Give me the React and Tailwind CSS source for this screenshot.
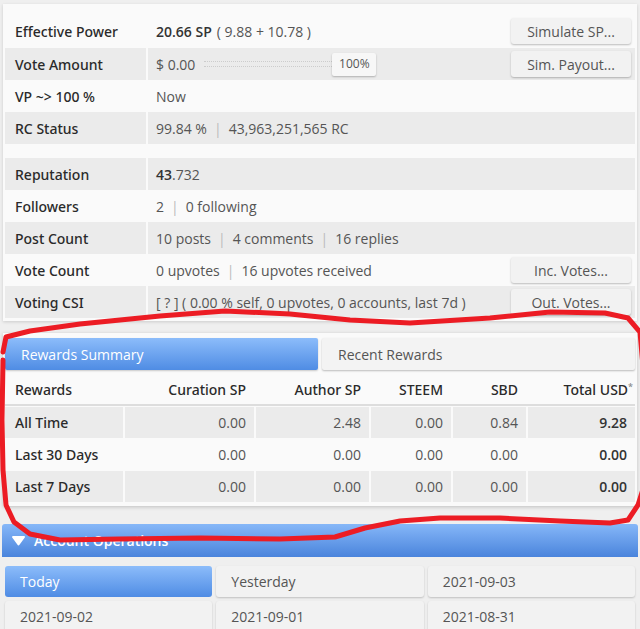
import React from 'react';

const Sep = () => <span className="mx-[7px] text-[#bbb]">|</span>;

const Btn = ({ children }) => (
  <button className="mr-[4px] h-[26px] w-[120px] rounded-[3px] bg-[#f2f2f2] text-[14px] text-[#555] shadow-[0_1px_2px_rgba(0,0,0,0.25)]">
    {children}
  </button>
);

const Slider = () => (
  <div className="flex items-center">
    <span>$ 0.00</span>
    <div className="ml-[9px] h-[6px] w-[128px] border-y border-dotted border-[#ccc]" />
    <div className="flex h-[23px] w-[44px] items-center justify-center rounded-[2px] bg-[#f7f7f7] text-[12px] text-[#555] shadow-[0_1px_2px_rgba(0,0,0,0.25)]">
      100%
    </div>
  </div>
);

const label = "font-['Noto_Sans','Open_Sans',sans-serif] font-medium text-[#2a2a2a]";

const Row = ({ label: text, gray, children, button, h = 'h-[32px]' }) => (
  <div className={`flex ${h} gap-[2px]`}>
    <div className={`flex w-[141px] items-center pl-[10px] ${label} ${gray ? 'bg-[#ebebeb]' : ''}`}>
      {text}
    </div>
    <div className={`flex flex-1 items-center justify-between pl-[8px] text-[#555] ${gray ? 'bg-[#ebebeb]' : ''}`}>
      <div className="flex items-center">{children}</div>
      {button && <Btn>{button}</Btn>}
    </div>
  </div>
);

const rewardRows = [
  ['All Time', '0.00', '2.48', '0.00', '0.84', '9.28'],
  ['Last 30 Days', '0.00', '0.00', '0.00', '0.00', '0.00'],
  ['Last 7 Days', '0.00', '0.00', '0.00', '0.00', '0.00'],
];

const cols = 'grid grid-cols-[118px_129px_113px_80px_73px_1fr] gap-x-[2px]';

const OpBtn = ({ children, active }) => (
  <div
    className={`flex h-[31px] items-center rounded-[3px] pl-[15px] ${
      active
        ? 'bg-gradient-to-b from-[#8cbcfa] to-[#4f8ce4] text-white'
        : 'bg-[#f2f2f2] text-[#555] shadow-[0_1px_2px_rgba(0,0,0,0.2)]'
    }`}
  >
    {children}
  </div>
);

export default function App() {
  return (
    <div className="relative h-[629px] w-[640px] overflow-hidden bg-[#efefef] pt-[4px] font-['Open_Sans','Noto_Sans',sans-serif] text-[14px]">
      {/* account stats card */}
      <div className="mx-[3px] bg-[#fafafa] px-[2px] pt-[10px] pb-[3px] shadow-[0_1px_3px_rgba(0,0,0,0.15)]">
        <Row label="Effective Power" button="Simulate SP..." h="h-[34px]">
          <span className="font-semibold text-[#333]">20.66 SP</span>
          <span className="ml-[5px]">( 9.88 + 10.78 )</span>
        </Row>
        <Row label="Vote Amount" gray button="Sim. Payout...">
          <Slider />
        </Row>
        <Row label="VP ~> 100 %">Now</Row>
        <Row label="RC Status" gray>
          99.84 % <Sep /> 43,963,251,565 RC
        </Row>
        <div className="h-[14px]" />
        <Row label="Reputation" gray>
          <span className="font-semibold text-[#333]">43</span>.732
        </Row>
        <Row label="Followers">
          2 <Sep /> 0 following
        </Row>
        <Row label="Post Count" gray>
          10 posts <Sep /> 4 comments <Sep /> 16 replies
        </Row>
        <Row label="Vote Count" button="Inc. Votes...">
          0 upvotes <Sep /> 16 upvotes received
        </Row>
        <Row label="Voting CSI" gray button="Out. Votes...">
          [ ? ] ( 0.00 % self, 0 upvotes, 0 accounts, last 7d )
        </Row>
      </div>

      {/* rewards card */}
      <div className="mx-[3px] mt-[12px] bg-[#fafafa] px-[2px] pt-[5px] pb-[4px] shadow-[0_1px_4px_rgba(0,0,0,0.2)]">
        <div className="flex gap-[4px]">
          <div className="flex h-[32px] w-[313px] items-center rounded-[2px] bg-gradient-to-b from-[#8cbcfa] to-[#4f8ce4] pl-[16px] text-white shadow-[0_1px_2px_rgba(0,0,0,0.2)]">
            Rewards Summary
          </div>
          <div className="flex h-[32px] flex-1 items-center rounded-[2px] bg-[#f3f3f3] pl-[16px] text-[#555] shadow-[0_1px_2px_rgba(0,0,0,0.25)]">
            Recent Rewards
          </div>
        </div>
        <div className={`${cols} mt-[4px] h-[32px] items-center border-b-2 border-[#ddd] ${label}`}>
          <div className="pl-[10px]">Rewards</div>
          <div className="pr-[8px] text-right">Curation SP</div>
          <div className="pr-[8px] text-right">Author SP</div>
          <div className="pr-[8px] text-right">STEEM</div>
          <div className="pr-[8px] text-right">SBD</div>
          <div className="pr-[2px] text-right">
            Total USD<sup className="text-[9px] text-[#888]">*</sup>
          </div>
        </div>
        {rewardRows.map((r, i) => (
          <div key={r[0]} className={`${cols} mt-[1px] h-[31px] text-[#555]`}>
            {r.map((c, j) => (
              <div
                key={j}
                className={`flex items-center ${i % 2 === 0 ? 'bg-[#ebebeb]' : ''} ${
                  j === 0 ? `pl-[10px] ${label}` : 'justify-end pr-[8px]'
                } ${j === 5 ? 'font-semibold text-[#333]' : ''}`}
              >
                {c}
              </div>
            ))}
          </div>
        ))}
      </div>

      {/* account operations */}
      <div className="mx-[2px] mt-[18px] flex h-[33px] items-center rounded-t-[3px] bg-gradient-to-b from-[#86b7f8] to-[#4a84dc] pl-[9px] font-semibold text-white">
        <svg width="15" height="11" viewBox="0 0 15 11" className="mr-[8px]">
          <path d="M2 2 H13 L7.5 9.5 Z" fill="white" stroke="white" strokeWidth="2" strokeLinejoin="round" />
        </svg>
        Account Operations
      </div>
      <div className="mx-[5px] mt-[9px] grid grid-cols-3 gap-x-[4px] gap-y-[4px]">
        <OpBtn active>Today</OpBtn>
        <OpBtn>Yesterday</OpBtn>
        <OpBtn>2021-09-03</OpBtn>
        <OpBtn>2021-09-02</OpBtn>
        <OpBtn>2021-09-01</OpBtn>
        <OpBtn>2021-08-31</OpBtn>
      </div>

      {/* hand-drawn red annotation */}
      <svg className="pointer-events-none absolute inset-0" width="640" height="629" viewBox="0 0 640 629">
        <path
          d="M3,352 L6,337 L30,331 L80,324 L160,316 L225,311 L290,314 L350,320 L410,323 L490,318 L550,312 L605,313 L628,318 L640,332 L646,400 L646,480 L638,505 L628,520 L610,523 L560,521 L500,518 L440,518 L400,521 L365,528 L335,537 L280,539 L200,538 L120,539 L60,540 L30,534 L14,522 L6,505 L3,470 L2,420 L3,360"
          fill="none"
          stroke="#ec1c24"
          strokeWidth="5"
          strokeLinejoin="round"
          strokeLinecap="round"
        />
      </svg>
    </div>
  );
}
